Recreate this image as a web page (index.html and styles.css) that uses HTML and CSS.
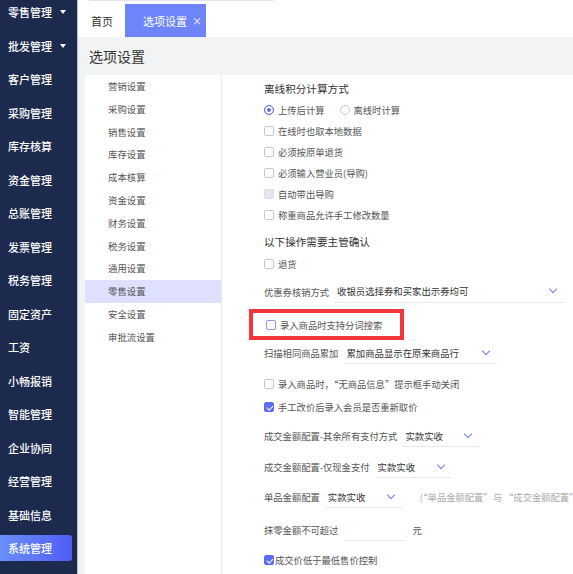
FILE: index.html
```html
<!DOCTYPE html>
<html lang="zh">
<head>
    <meta charset="UTF-8">
    <meta name="viewport" content="width=device-width, initial-scale=1.0">
    <title>选项设置</title>
    <link rel="stylesheet" href="styles.css">
</head>
<body>
    <aside class="sidebar">
        <ul class="nav">
            <li class="nav-item">零售管理<span class="caret"></span></li>
            <li class="nav-item">批发管理<span class="caret"></span></li>
            <li class="nav-item">客户管理</li>
            <li class="nav-item">采购管理</li>
            <li class="nav-item">库存核算</li>
            <li class="nav-item">资金管理</li>
            <li class="nav-item">总账管理</li>
            <li class="nav-item">发票管理</li>
            <li class="nav-item">税务管理</li>
            <li class="nav-item">固定资产</li>
            <li class="nav-item">工资</li>
            <li class="nav-item">小畅报销</li>
            <li class="nav-item">智能管理</li>
            <li class="nav-item">企业协同</li>
            <li class="nav-item">经营管理</li>
            <li class="nav-item">基础信息</li>
            <li class="nav-item active">系统管理</li>
        </ul>
    </aside>

    <div class="main">
        <div class="topbar"><div class="search-line"></div></div>

        <div class="tabs">
            <div class="tab">首页</div>
            <div class="tab active">选项设置<span class="tab-close">×</span></div>
        </div>

        <h2 class="page-title">选项设置</h2>

        <div class="panel">
            <ul class="menu">
                <li>营销设置</li>
                <li>采购设置</li>
                <li>销售设置</li>
                <li>库存设置</li>
                <li>成本核算</li>
                <li>资金设置</li>
                <li>财务设置</li>
                <li>税务设置</li>
                <li>通用设置</li>
                <li class="selected">零售设置</li>
                <li>安全设置</li>
                <li>审批流设置</li>
            </ul>

            <div class="form">
                <!-- 离线积分 -->
                <div class="group points">
                    <div class="row heading">离线积分计算方式</div>
                    <div class="row">
                        <label class="radio"><span class="dot checked"></span>上传后计算</label>
                        <label class="radio"><span class="dot"></span>离线时计算</label>
                    </div>
                    <label class="row opt"><span class="box"></span>在线时也取本地数据</label>
                    <label class="row opt"><span class="box"></span>必须按原单退货</label>
                    <label class="row opt"><span class="box"></span>必须输入营业员(导购)</label>
                    <label class="row opt"><span class="box disabled"></span>自动带出导购</label>
                    <label class="row opt"><span class="box"></span>称重商品允许手工修改数量</label>
                </div>

                <!-- 主管确认 -->
                <div class="group confirm">
                    <div class="row heading">以下操作需要主管确认</div>
                    <label class="row opt"><span class="box"></span>退货</label>
                </div>

                <div class="field coupon">
                    <span class="field-label">优惠券核销方式</span>
                    <div class="select wide">收银员选择券和买家出示券均可<span class="chevron"></span></div>
                </div>

                <div class="focus-box">
                    <label class="row opt"><span class="box focus"></span>录入商品时支持分词搜索</label>
                </div>

                <div class="field scan">
                    <span class="field-label">扫描相同商品累加</span>
                    <div class="select mid">累加商品显示在原来商品行<span class="chevron"></span></div>
                </div>

                <div class="group extra">
                    <label class="row opt"><span class="box"></span>录入商品时，“无商品信息”提示框手动关闭</label>
                    <label class="row opt"><span class="box checked"></span>手工改价后录入会员是否重新取价</label>
                </div>

                <div class="field amount-1">
                    <span class="field-label">成交金额配置-其余所有支付方式</span>
                    <div class="select small">实款实收<span class="chevron"></span></div>
                </div>

                <div class="field amount-2">
                    <span class="field-label">成交金额配置-仅现金支付</span>
                    <div class="select small">实款实收<span class="chevron"></span></div>
                </div>

                <div class="field amount-3">
                    <span class="field-label">单品金额配置</span>
                    <div class="select small">实款实收<span class="chevron"></span></div>
                    <span class="note">(“单品金额配置”与 “成交金额配置”必须</span>
                </div>

                <div class="field rounding">
                    <span class="field-label">抹零金额不可超过</span>
                    <div class="input"></div>
                    <span class="unit">元</span>
                </div>

                <label class="row opt tight last"><span class="box checked"></span>成交价低于最低售价控制</label>
            </div>
        </div>
    </div>
</body>
</html>
```

FILE: styles.css
```css
* {
    box-sizing: border-box;
}

body {
    margin: 0;
    height: 574px;
    overflow: hidden;
    display: flex;
    font-family: "Noto Sans CJK SC", "Noto Sans", sans-serif;
    background: #f2f3f5;
    color: #555;
}

ul {
    list-style: none;
    margin: 0;
    padding: 0;
}

/* 左侧导航 */
.sidebar {
    width: 78px;
    flex-shrink: 0;
    background: #1c2a4e;
    border-right: 1px solid #b9bfcc;
    overflow: hidden;
}

.nav {
    margin-top: -1px;
}

.nav-item {
    position: relative;
    height: 26px;
    margin-bottom: 7.5px;
    width: 72px;
    display: flex;
    align-items: center;
    padding-left: 8px;
    color: #fff;
    font-size: 11px;
    font-weight: 500;
}

.nav-item.active {
    background: linear-gradient(90deg, #6a8ff8 0%, #5a72f6 60%, #4f5cf6 100%);
    border-radius: 0 3px 3px 0;
}

.caret {
    position: absolute;
    left: 60px;
    top: 11px;
    border-left: 3.5px solid transparent;
    border-right: 3.5px solid transparent;
    border-top: 4px solid #fff;
}

/* 主区域 */
.main {
    flex: 1;
    display: flex;
    flex-direction: column;
    min-width: 0;
}

.topbar {
    height: 4px;
    background: #fff;
    padding-left: 11px;
}

.search-line {
    width: 185px;
    height: 1px;
    background: #e2e4e8;
}

.tabs {
    height: 33px;
    background: #fff;
    display: flex;
}

.tab {
    display: flex;
    align-items: center;
    padding-left: 13px;
    width: 47px;
    font-size: 11px;
    color: #333;
    white-space: nowrap;
}

.tab.active {
    width: 81px;
    padding-left: 18px;
    background: #6d84fb;
    color: #fff;
}

.tab-close {
    margin-left: 5px;
    font-size: 10px;
}

.page-title {
    margin: 0;
    height: 38px;
    line-height: 38px;
    padding-left: 11px;
    font-size: 14px;
    font-weight: normal;
    color: #333;
}

.panel {
    flex: 1;
    margin-left: 7px;
    background: #fff;
    display: flex;
    min-height: 0;
}

/* 设置菜单 */
.menu {
    width: 137px;
    flex-shrink: 0;
    border-right: 1px solid #ececf0;
}

.menu li {
    height: 22.8px;
    line-height: 22.8px;
    padding-left: 23px;
    font-size: 9.4px;
    color: #555;
}

.menu li.selected {
    background: #dee0fd;
}

/* 表单 */
.form {
    flex: 1;
    padding-left: 42px;
    display: flex;
    flex-direction: column;
    font-size: 9.3px;
    white-space: nowrap;
    min-width: 0;
    overflow: hidden;
}

.row {
    height: 21px;
    display: flex;
    align-items: center;
}

.heading {
    font-size: 10.6px;
    color: #333;
}

.points {
    padding-top: 3px;
}

.confirm {
    margin-top: 5.5px;
}

.confirm .opt {
    margin-top: 2px;
}

.extra {
    margin-top: 7.5px;
}

.extra .opt + .opt {
    margin-top: 2px;
}

.radio {
    display: flex;
    align-items: center;
    margin-right: 15px;
}

.dot {
    width: 10px;
    height: 10px;
    border: 1px solid #c4c8d0;
    border-radius: 50%;
    margin-right: 4px;
}

.dot.checked {
    border-color: #5b6cf5;
    background: #5b6cf5;
    box-shadow: inset 0 0 0 2px #fff;
}

.box {
    position: relative;
    width: 10px;
    height: 10px;
    border: 1px solid #c4c8d0;
    border-radius: 2px;
    margin-right: 4px;
    flex-shrink: 0;
}

.box.disabled {
    background: #e3e6f0;
    border-color: #dadeea;
}

.box.focus {
    border-color: #8b98f3;
}

.box.checked {
    background: #5b6cf5;
    border-color: #5b6cf5;
}

.box.checked::after {
    content: '';
    position: absolute;
    left: 2.5px;
    top: 0.5px;
    width: 2.5px;
    height: 5px;
    border-right: 1.5px solid #fff;
    border-bottom: 1.5px solid #fff;
    transform: rotate(45deg);
}

.tight .box {
    margin-right: 1px;
}

.last {
    margin-top: 5.5px;
}

/* 红框 */
.focus-box {
    margin: 3.5px 0 0 -15px;
    width: 155px;
    height: 31px;
    border: 4px solid #f2363c;
    padding-left: 13px;
}

.focus-box .row {
    height: 23px;
}

/* 下拉字段 */
.field {
    height: 28px;
    display: flex;
    align-items: center;
    margin-top: 3px;
}

.field-label {
    margin-right: 6px;
    flex-shrink: 0;
}

.coupon {
    margin-top: 3px;
}

.scan {
    height: 26px;
    margin-top: 0;
}

.amount-1 {
    margin-top: 4.5px;
}

.amount-2 {
    margin-top: 3px;
}

.amount-3 {
    margin-top: 2px;
}

.rounding {
    margin-top: 5px;
}

.select {
    height: 22px;
    flex-shrink: 0;
    display: flex;
    align-items: center;
    justify-content: space-between;
    padding: 0 8px 0 2px;
    border-bottom: 1px solid #e6e8ee;
    font-size: 9.4px;
    color: #333;
}

.select.wide {
    width: 229px;
}

.select.mid {
    width: 153px;
}

.select.small {
    width: 76px;
}

.chevron {
    width: 6px;
    height: 6px;
    border-right: 1.2px solid #6b7ef5;
    border-bottom: 1.2px solid #6b7ef5;
    transform: rotate(45deg);
    margin-top: -4px;
}

.note {
    margin-left: 18px;
    color: #aaa;
}

.input {
    width: 61px;
    height: 22px;
    flex-shrink: 0;
    border-bottom: 1px solid #e6e8ee;
}

.unit {
    margin-left: 7px;
}
```
